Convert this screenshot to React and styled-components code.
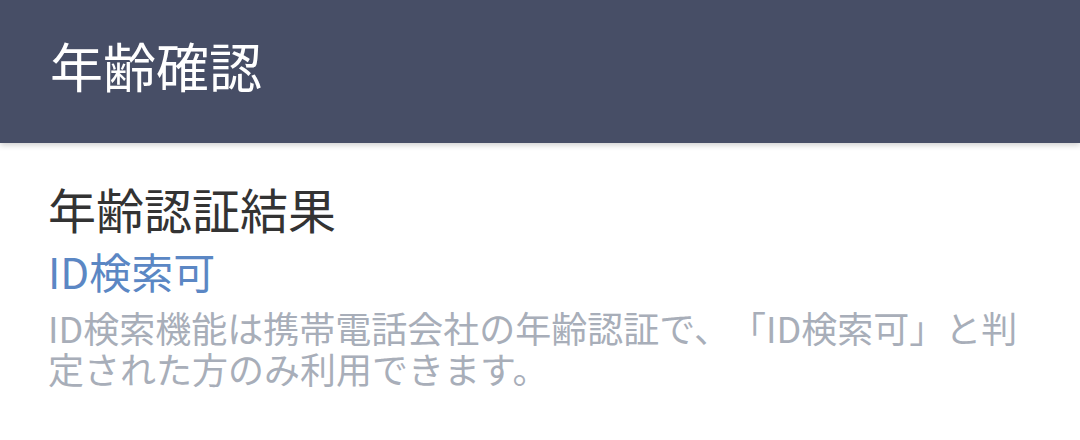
import React from "react";
import styled, { createGlobalStyle } from "styled-components";

const Global = createGlobalStyle`
  html, body { margin: 0; padding: 0; background: #ffffff; }
  body {
    font-family: "Noto Sans CJK JP", "Noto Sans", sans-serif;
    text-spacing-trim: space-all;
  }
`;

const Page = styled.div`
  width: 1080px;
  height: 440px;
  background: #ffffff;
  overflow: hidden;
`;

const Header = styled.header`
  height: 143px;
  background: #474e66;
  display: flex;
  align-items: center;
  padding: 0 0 12px 50px;
  box-sizing: border-box;
  box-shadow: 0 2px 6px rgba(0, 0, 0, 0.2);
  position: relative;
`;

const HeaderTitle = styled.h1`
  margin: 0;
  font-size: 53px;
  font-weight: 400;
  color: #ffffff;
  line-height: 1;
`;

const Content = styled.section`
  padding: 37px 48px 0 48px;
  display: flex;
  flex-direction: column;
`;

const SectionTitle = styled.h2`
  margin: 0;
  font-size: 48px;
  font-weight: 400;
  color: #333333;
  line-height: 56px;
`;

const Status = styled.div`
  margin-top: 10px;
  font-size: 42px;
  color: #5b87c4;
  line-height: 50px;
`;

const Description = styled.p`
  margin: 11px 0 0 0;
  font-size: 36px;
  color: #a8aeb9;
  line-height: 41px;
`;

export default function App() {
  return (
    <Page>
      <Global />
      <Header>
        <HeaderTitle>年齢確認</HeaderTitle>
      </Header>
      <Content>
        <SectionTitle>年齢認証結果</SectionTitle>
        <Status>ID検索可</Status>
        <Description>
          ID検索機能は携帯電話会社の年齢認証で、「ID検索可」と判定された方のみ利用できます。
        </Description>
      </Content>
    </Page>
  );
}
